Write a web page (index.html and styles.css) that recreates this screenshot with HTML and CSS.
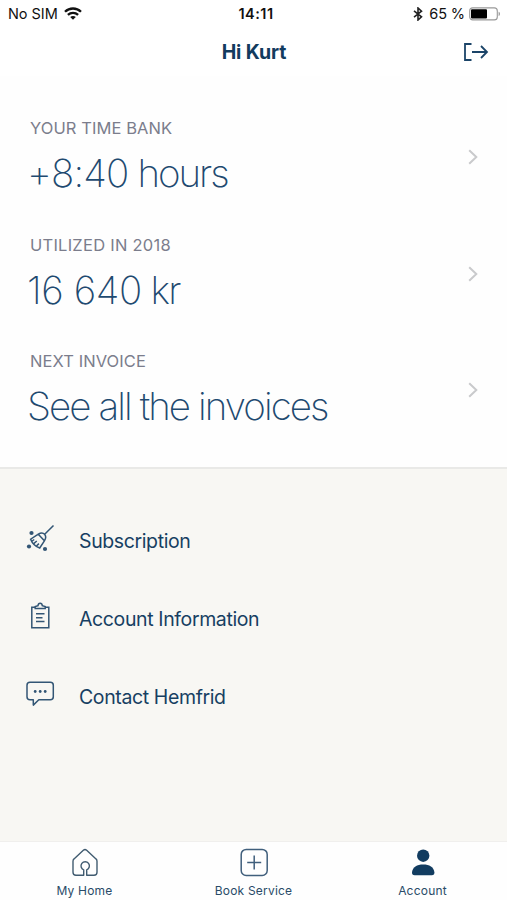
FILE: index.html
```html
<!DOCTYPE html>
<html lang="en">
<head>
<meta charset="utf-8">
<title>Account</title>
<link rel="stylesheet" href="styles.css">
</head>
<body>
<div class="app">
  <div class="status">
    <div class="status-left"><span class="carrier">No SIM</span>
      <svg width="18" height="13" viewBox="0 0 18 13" fill="none" stroke="#111" stroke-width="2.3"><path d="M1 4.8C5.5.4 12.5.4 17 4.8M3.9 7.9c2.9-2.8 7.3-2.8 10.2 0"/><path d="M6.2 10.1c1.6-1.5 4-1.5 5.6 0L9 12.8z" fill="#111" stroke="none"/></svg>
    </div>
    <div class="clock">14:11</div>
    <div class="status-right">
      <svg width="10" height="14" viewBox="0 0 10 14" fill="none" stroke="#222" stroke-width="1.6"><path d="M1 3.8l7.5 6L5 13V1l3.500 3.200-7.500 6"/></svg>
      <span class="percent">65 %</span>
      <svg width="32" height="14" viewBox="0 0 32 14"><rect x=".7" y=".9" width="27.6" height="12" rx="3" fill="#fff" stroke="#999" stroke-width="1.1"/><rect x="2" y="2.3" width="16" height="9.2" rx="1" fill="#000"/><path d="M29.6 4.8c1.8.4 1.8 3.8 0 4.2z" fill="#999"/></svg>
    </div>
  </div>
  <header class="header">
    <h1>Hi Kurt</h1>
    <svg class="logout" width="26" height="20" viewBox="0 0 26 20" fill="none" stroke="#1b4468" stroke-width="1.8"><path d="M8.500 2H2v16h6.500M9 10h15M18 4l6 6-6 6"/></svg>
  </header>
  <main class="summary">
    <section class="stat"><div><h2>YOUR TIME BANK</h2><p><span class="figure">+8:40</span> hours</p></div><svg class="chevron" width="10" height="16" viewBox="0 0 10 16"><path d="M1.200 1.200L8.300 8l-7.100 6.800"/></svg></section>
    <section class="stat"><div><h2 class="used-label">UTILIZED IN 2018</h2><p><span class="amount">16 640</span> kr</p></div><svg class="chevron" width="10" height="16" viewBox="0 0 10 16"><path d="M1.200 1.200L8.300 8l-7.100 6.800"/></svg></section>
    <section class="stat"><div><h2>NEXT INVOICE</h2><p class="invoices">See all the invoices</p></div><svg class="chevron" width="10" height="16" viewBox="0 0 10 16"><path d="M1.200 1.200L8.300 8l-7.100 6.800"/></svg></section>
  </main>
  <nav class="menu">
    <a class="row"><svg width="30" height="30" viewBox="0 0 30 30" fill="none" stroke="#335675" stroke-width="1.5"><path d="M28.500 1.500L19.700 10.300M13.300 10.200c2.700-1.700 4.800-1.600 6.300.1 1.600 1.900 1.500 4-.2 6.500zM13.300 10.200L5.600 15.200c1.700 4.300 4.600 7.200 9.100 8.800l4.700-7.200zM9 19.300l2.800-2.300M11.700 21.800l2.200-2.200M7.200 17l2-1.500"/><g fill="#335675" stroke="none"><circle cx="6.500" cy="9" r="2.100"/><circle cx="4" cy="22.500" r="2.100"/><circle cx="20" cy="25" r="2.100"/></g></svg><span>Subscription</span></a>
    <a class="row"><svg width="30" height="30" viewBox="0 0 30 30" fill="none" stroke="#335675" stroke-width="1.5"><path d="M10 5.200H6.800v20.500h17V5.200h-3.400M10.200 6.600v-2l2.800-1c.3-3.100 4-3.100 4.300 0l2.900 1v2zM11 11.800h8.500M11 15.700h6.500M11 19.600h8.500"/></svg><span>Account Information</span></a>
    <a class="row"><svg width="30" height="30" viewBox="0 0 30 30" fill="none" stroke="#335675" stroke-width="1.5"><path d="M5 2.200h20.300a3 3 0 0 1 3 3v11.600a3 3 0 0 1-3 3H13.800L8.300 25.100v-5.300H5a3 3 0 0 1-3-3V5.200a3 3 0 0 1 3-3z" stroke-linejoin="round"/><g fill="#335675" stroke="none"><circle cx="10.200" cy="11.500" r="1.400"/><circle cx="15.200" cy="11.500" r="1.400"/><circle cx="20.200" cy="11.500" r="1.400"/></g></svg><span>Contact Hemfrid</span></a>
  </nav>
  <footer class="tabs">
    <a class="tab"><svg width="30" height="30" viewBox="0 0 30 30" fill="none" stroke="#405b70" stroke-width="1.400" stroke-linejoin="round"><path d="M13.700 28.300H6a3 3 0 0 1-3-3V14.200c0-1 .3-1.700 1-2.300l9.600-8.800c1-.8 1.800-.8 2.800 0l9.600 8.800c.7.600 1 1.300 1 2.300v11.100a3 3 0 0 1-3 3h-7.300v-5.500a4.200 4.200 0 1 0-3 0z"/></svg><span>My Home</span></a>
    <a class="tab"><svg width="30" height="30" viewBox="0 0 30 30" fill="none" stroke="#405f7c" stroke-width="1.500"><rect x="2.200" y="2.400" width="26" height="26" rx="5"/><path d="M15.200 8.500v14M8.200 15.500h14"/></svg><span>Book Service</span></a>
    <a class="tab"><svg width="30" height="30" viewBox="0 0 30 30" fill="#123c60"><circle cx="15.200" cy="8.700" r="6.200"/><path d="M4 25.500C4.500 19.700 9 17.400 15.200 17.400S25.900 19.700 26.400 25.500c0 1.900-.7 2.700-2.600 2.700H6.600C4.700 28.200 4 27.400 4 25.500z"/></svg><span>Account</span></a>
  </footer>
</div>
</body>
</html>
```

FILE: styles.css
```css
* { box-sizing: border-box; }
body { margin: 0; font-family: Inter, "Liberation Sans", sans-serif; background: #fff; }
h1, h2, p { margin: 0; font-weight: 400; white-space: nowrap; }
svg { display: block; flex: none; }
.app { width: 507px; height: 900px; display: flex; flex-direction: column; color: #173f62; overflow: hidden; }
.status { height: 27px; padding: 0 6px 0 8px; display: grid; grid-template-columns: 1fr auto 1fr; align-items: center; color: #111; font-size: 14.5px; }
.status-left, .status-right { display: flex; align-items: center; }
.status-left { gap: 6px; }
.carrier { letter-spacing: -.05px; }
.status-right { justify-content: flex-end; gap: 4px; }
.percent { letter-spacing: -.1px; margin-left: 2px; }
.clock { font-weight: 600; letter-spacing: .5px; padding-left: 3px; }
.header { height: 49px; padding: 0 18px 0 45px; display: grid; grid-template-columns: 1fr auto; align-items: center; text-align: center; }
.header h1 { font-size: 19.5px; font-weight: 700; color: #123b5e; letter-spacing: -.1px; }
.summary { height: 391px; padding-top: 40px; background: #fefefe; }
.stat { height: 116.5px; display: flex; justify-content: space-between; padding: 0 29px 0 30px; }
.stat h2 { font-size: 16.5px; line-height: 24px; color: #7b7d8c; letter-spacing: .08px; }
.stat .used-label { letter-spacing: .25px; }
.stat p { font-size: 38.5px; line-height: 48px; font-weight: 200; letter-spacing: -2px; margin: 9px 0 0 -3px; color: #1f4a70; }
.stat .figure { letter-spacing: -.8px; }
.stat .amount { letter-spacing: -.4px; }
.stat .invoices { letter-spacing: -1.9px; }
.chevron { margin-top: 33px; fill: none; stroke: #c9cacc; stroke-width: 2; }
.menu { height: 375px; padding: 33px 25px 0; background: #f8f7f3; border-top: 2px solid #e9e9e7; border-bottom: 1px solid #f0efed; }
.row { height: 78px; display: flex; align-items: center; gap: 24px; }
.row svg { margin-top: -4px; }
.row span { font-size: 19.5px; letter-spacing: -.38px; white-space: nowrap; }
.tabs { height: 58px; display: grid; grid-template-columns: repeat(3, 1fr); background: #fefefe; }
.tab { display: flex; flex-direction: column; align-items: center; padding-top: 5px; gap: 6px; }
.tab span { font-size: 12px; line-height: 16px; letter-spacing: .2px; color: #294b68; }
```
